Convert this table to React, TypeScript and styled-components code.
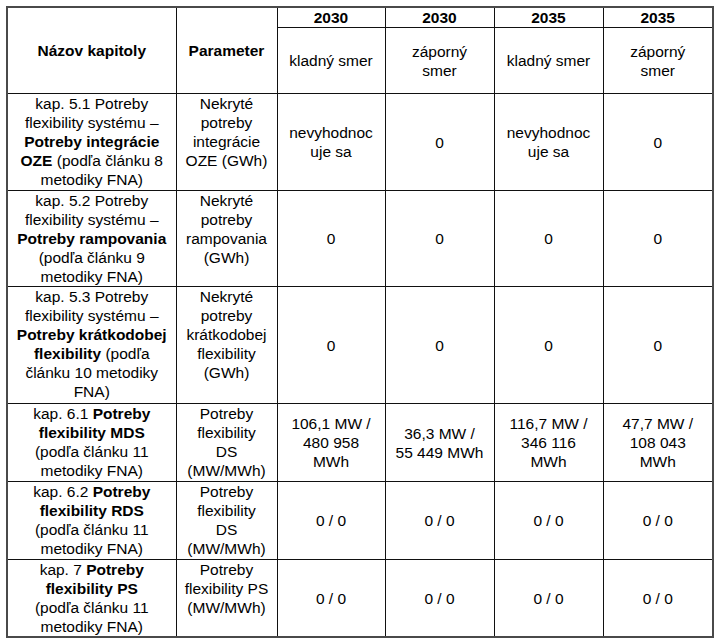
import React from "react";
import styled, { createGlobalStyle } from "styled-components";

const GlobalStyle = createGlobalStyle`
	html, body {
		margin: 0;
		padding: 0;
		background: #ffffff;
	}
	body {
		font-family: "Liberation Sans", Arial, sans-serif;
		color: #000000;
		overflow: hidden;
	}
`;

const StyledPage = styled.div`
	padding: 6px 0 0 6px;
	height: 643px;
	box-sizing: border-box;
	overflow: hidden;
`;

const StyledTable = styled.table`
	border-collapse: collapse;
	table-layout: fixed;
	width: 706px;
	border: 2px solid #4a4a4a;
	font-size: 15.5px;
	line-height: 19px;
`;

const StyledRow = styled.tr<{ $height: number }>`
	height: ${(p) => p.$height}px;
`;

const StyledHeadCell = styled.th`
	border: 1px solid #111111;
	padding: 0 4px;
	font-weight: bold;
	text-align: center;
	vertical-align: middle;
	white-space: nowrap;
`;

const StyledSubHeadCell = styled.td`
	border: 1px solid #111111;
	padding: 0 4px;
	text-align: center;
	vertical-align: middle;
	white-space: nowrap;
`;

const StyledLabelCell = styled.td`
	border: 1px solid #111111;
	padding: 0 4px;
	text-align: center;
	vertical-align: top;
	white-space: nowrap;
`;

const StyledValueCell = styled.td`
	border: 1px solid #111111;
	padding: 0 4px;
	text-align: center;
	vertical-align: middle;
	white-space: nowrap;
`;

const StyledStrong = styled.b`
	font-weight: bold;
`;

const StyledCaption = styled.div`
	margin: 2px 0 0 152px;
	font-size: 15px;
	line-height: 17px;
	font-weight: bold;
	color: #a8a8a8;
	white-space: nowrap;
`;

type Row = {
	height: number;
	chapter: React.ReactNode;
	parameter: React.ReactNode;
	values: React.ReactNode[];
};

const rows: Row[] = [
	{
		height: 97,
		chapter: (
			<>
				kap. 5.1 Potreby<br />
				flexibility systému –<br />
				<StyledStrong>Potreby integrácie</StyledStrong><br />
				<StyledStrong>OZE</StyledStrong> (podľa článku 8<br />
				metodiky FNA)
			</>
		),
		parameter: (
			<>
				Nekryté<br />
				potreby<br />
				integrácie<br />
				OZE (GWh)
			</>
		),
		values: [
			<>nevyhodnoc<br />uje sa</>,
			"0",
			<>nevyhodnoc<br />uje sa</>,
			"0",
		],
	},
	{
		height: 96,
		chapter: (
			<>
				kap. 5.2 Potreby<br />
				flexibility systému –<br />
				<StyledStrong>Potreby rampovania</StyledStrong><br />
				(podľa článku 9<br />
				metodiky FNA)
			</>
		),
		parameter: (
			<>
				Nekryté<br />
				potreby<br />
				rampovania<br />
				(GWh)
			</>
		),
		values: ["0", "0", "0", "0"],
	},
	{
		height: 117,
		chapter: (
			<>
				kap. 5.3 Potreby<br />
				flexibility systému –<br />
				<StyledStrong>Potreby krátkodobej</StyledStrong><br />
				<StyledStrong>flexibility</StyledStrong> (podľa<br />
				článku 10 metodiky<br />
				FNA)
			</>
		),
		parameter: (
			<>
				Nekryté<br />
				potreby<br />
				krátkodobej<br />
				flexibility<br />
				(GWh)
			</>
		),
		values: ["0", "0", "0", "0"],
	},
	{
		height: 78,
		chapter: (
			<>
				kap. 6.1 <StyledStrong>Potreby</StyledStrong><br />
				<StyledStrong>flexibility MDS</StyledStrong><br />
				(podľa článku 11<br />
				metodiky FNA)
			</>
		),
		parameter: (
			<>
				Potreby<br />
				flexibility<br />
				DS<br />
				(MW/MWh)
			</>
		),
		values: [
			<>106,1 MW /<br />480 958<br />MWh</>,
			<>36,3 MW /<br />55 449 MWh</>,
			<>116,7 MW /<br />346 116<br />MWh</>,
			<>47,7 MW /<br />108 043<br />MWh</>,
		],
	},
	{
		height: 78,
		chapter: (
			<>
				kap. 6.2 <StyledStrong>Potreby</StyledStrong><br />
				<StyledStrong>flexibility RDS</StyledStrong><br />
				(podľa článku 11<br />
				metodiky FNA)
			</>
		),
		parameter: (
			<>
				Potreby<br />
				flexibility<br />
				DS<br />
				(MW/MWh)
			</>
		),
		values: ["0 / 0", "0 / 0", "0 / 0", "0 / 0"],
	},
	{
		height: 77,
		chapter: (
			<>
				kap. 7 <StyledStrong>Potreby</StyledStrong><br />
				<StyledStrong>flexibility PS</StyledStrong><br />
				(podľa článku 11<br />
				metodiky FNA)
			</>
		),
		parameter: (
			<>
				Potreby<br />
				flexibility PS<br />
				(MW/MWh)
			</>
		),
		values: ["0 / 0", "0 / 0", "0 / 0", "0 / 0"],
	},
];

const years = ["2030", "2030", "2035", "2035"];
const directions: React.ReactNode[] = [
	"kladný smer",
	<>záporný<br />smer</>,
	"kladný smer",
	<>záporný<br />smer</>,
];

const App = () => {
	return (
		<>
			<GlobalStyle />
			<StyledPage>
				<StyledTable>
					<colgroup>
						<col style={{ width: 169 }} />
						<col style={{ width: 101 }} />
						<col style={{ width: 108 }} />
						<col style={{ width: 109 }} />
						<col style={{ width: 109 }} />
						<col style={{ width: 110 }} />
					</colgroup>
					<thead>
						<StyledRow $height={20}>
							<StyledHeadCell rowSpan={2}>Názov kapitoly</StyledHeadCell>
							<StyledHeadCell rowSpan={2}>Parameter</StyledHeadCell>
							{years.map((year, i) => (
								<StyledHeadCell key={i}>{year}</StyledHeadCell>
							))}
						</StyledRow>
						<StyledRow $height={66}>
							{directions.map((dir, i) => (
								<StyledSubHeadCell key={i}>{dir}</StyledSubHeadCell>
							))}
						</StyledRow>
					</thead>
					<tbody>
						{rows.map((row, i) => (
							<StyledRow key={i} $height={row.height}>
								<StyledLabelCell>{row.chapter}</StyledLabelCell>
								<StyledLabelCell>{row.parameter}</StyledLabelCell>
								{row.values.map((value, j) => (
									<StyledValueCell key={j}>{value}</StyledValueCell>
								))}
							</StyledRow>
						))}
					</tbody>
				</StyledTable>
				<StyledCaption>
					Tabuľka 1 Súhrn výsledkov hodnotenia potrieb flexibility
				</StyledCaption>
			</StyledPage>
		</>
	);
};

export default App;
